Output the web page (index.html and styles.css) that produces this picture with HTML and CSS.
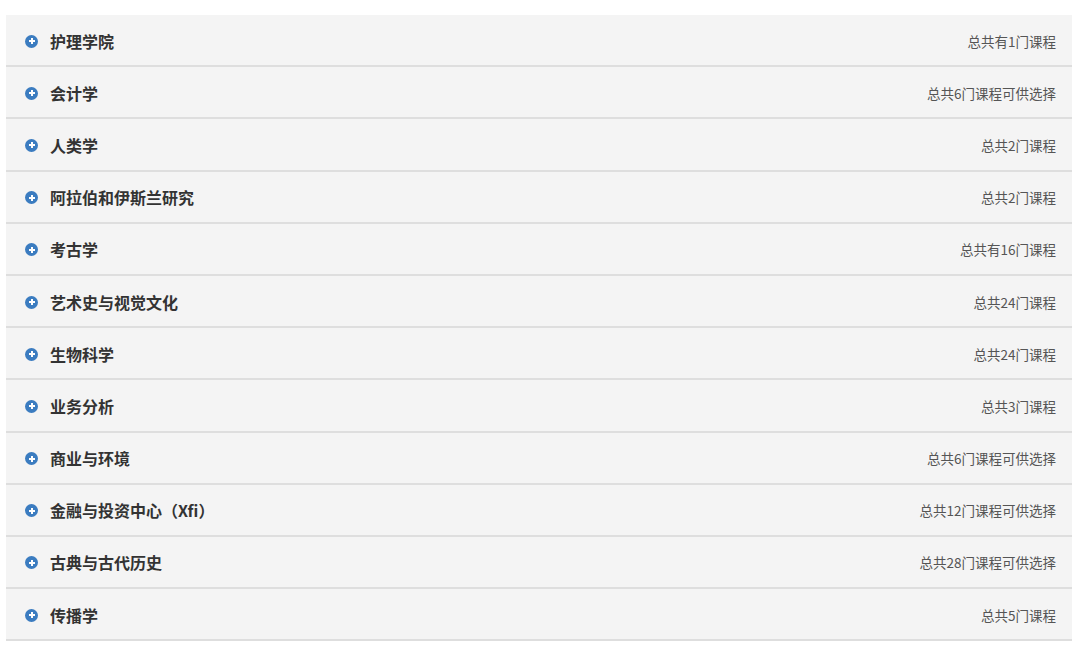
FILE: index.html
```html
<!DOCTYPE html>
<html lang="zh">
<head>
<meta charset="utf-8">
<link rel="stylesheet" href="styles.css">
</head>
<body>
<div class="list">
  <div class="row"><span class="icon"></span><span class="title">护理学院</span><span class="count">总共有1门课程</span></div>
  <div class="row"><span class="icon"></span><span class="title">会计学</span><span class="count">总共6门课程可供选择</span></div>
  <div class="row"><span class="icon"></span><span class="title">人类学</span><span class="count">总共2门课程</span></div>
  <div class="row"><span class="icon"></span><span class="title">阿拉伯和伊斯兰研究</span><span class="count">总共2门课程</span></div>
  <div class="row"><span class="icon"></span><span class="title">考古学</span><span class="count">总共有16门课程</span></div>
  <div class="row"><span class="icon"></span><span class="title">艺术史与视觉文化</span><span class="count">总共24门课程</span></div>
  <div class="row"><span class="icon"></span><span class="title">生物科学</span><span class="count">总共24门课程</span></div>
  <div class="row"><span class="icon"></span><span class="title">业务分析</span><span class="count">总共3门课程</span></div>
  <div class="row"><span class="icon"></span><span class="title">商业与环境</span><span class="count">总共6门课程可供选择</span></div>
  <div class="row"><span class="icon"></span><span class="title">金融与投资中心（Xfi）</span><span class="count">总共12门课程可供选择</span></div>
  <div class="row"><span class="icon"></span><span class="title">古典与古代历史</span><span class="count">总共28门课程可供选择</span></div>
  <div class="row"><span class="icon"></span><span class="title">传播学</span><span class="count">总共5门课程</span></div>
</div>
</body>
</html>
```

FILE: styles.css
```css
html, body {
  margin: 0;
  padding: 0;
  background: #ffffff;
}
body {
  padding: 15px 8px 0 6px;
  font-family: "Microsoft YaHei", "Noto Sans CJK SC", "Liberation Sans", sans-serif;
}
.list {
  display: flex;
  flex-direction: column;
}
.row {
  box-sizing: border-box;
  display: flex;
  align-items: center;
  height: 52.2px;
  background: #f4f4f4;
  border-bottom: 2px solid #dedede;
  padding: 1px 16px 0 19px;
}
.icon {
  width: 13px;
  height: 13px;
  border-radius: 50%;
  background: #3b7cc0;
  position: relative;
  flex: none;
  margin-right: 12px;
  margin-top: 1px;
}
.icon::before,
.icon::after {
  content: "";
  position: absolute;
  background: #ffffff;
  left: 50%;
  top: 50%;
  transform: translate(-50%, -50%);
}
.icon::before {
  width: 6px;
  height: 2px;
}
.icon::after {
  width: 2px;
  height: 6px;
}
.title {
  font-size: 16px;
  font-weight: bold;
  color: #333333;
  flex: 1;
}
.count {
  font-size: 13.5px;
  color: #555555;
}
```
